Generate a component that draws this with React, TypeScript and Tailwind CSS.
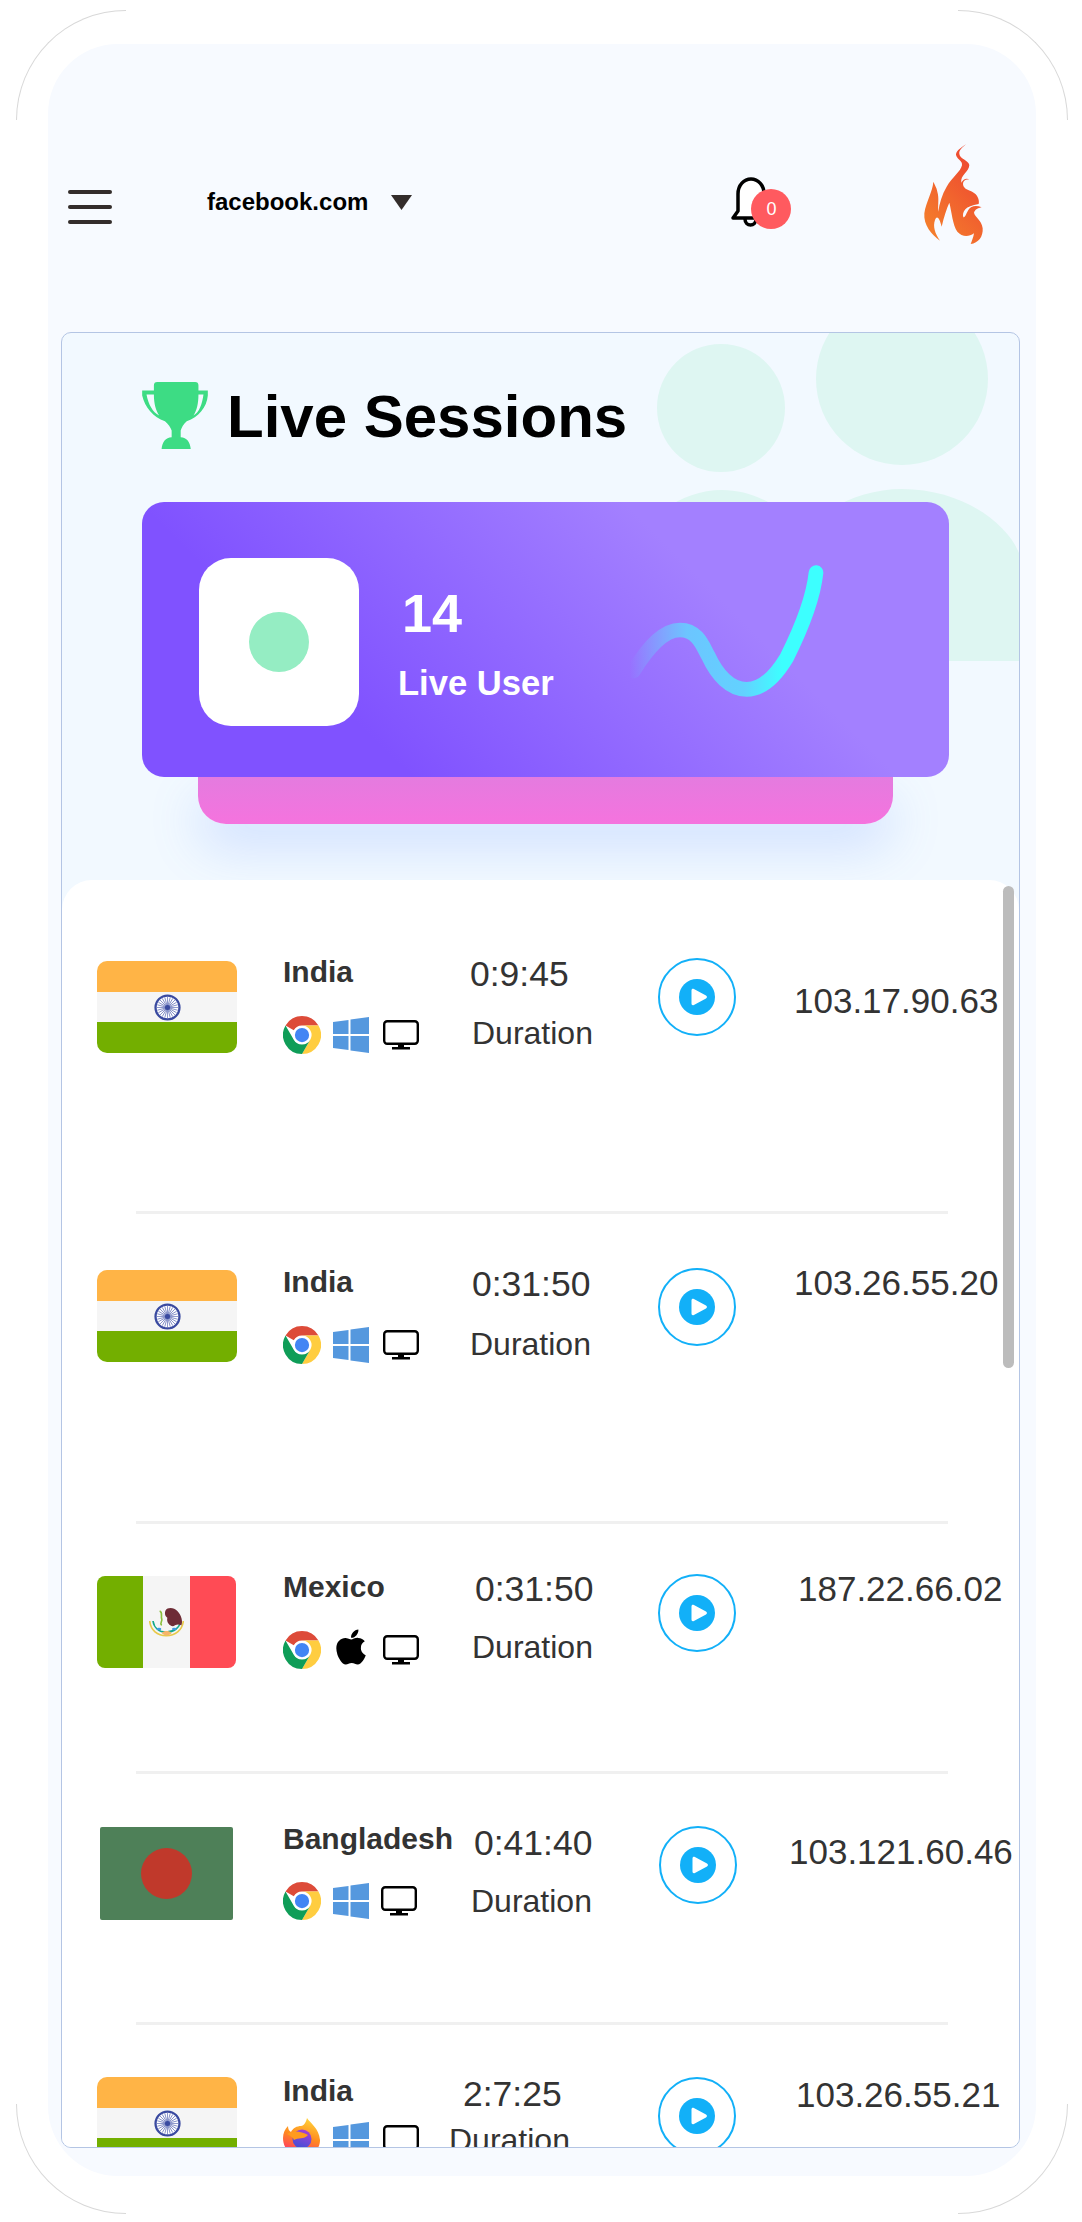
import React from 'react';
import { FaApple } from 'react-icons/fa';

const Chrome = () => (
  <svg viewBox="0 0 48 48" className="w-[38px] h-[38px] shrink-0">
    <path d="M24 0A24 24 0 0 1 44.8 12H24A12 12 0 0 0 13.6 18L3.2 12A24 24 0 0 1 24 0Z" fill="#dd4b39" />
    <path d="M44.8 12A24 24 0 0 1 24 48L34.4 30A12 12 0 0 0 24 12Z" fill="#ffcd40" />
    <path d="M3.2 12A24 24 0 0 0 24 48L34.4 30A12 12 0 0 1 13.6 30Z" fill="#0f9d58" />
    <circle cx="24" cy="24" r="11.5" fill="#fff" />
    <circle cx="24" cy="24" r="9" fill="#4285f4" />
  </svg>
);

const Firefox = () => (
  <svg viewBox="0 0 38 38" className="w-[38px] h-[38px] shrink-0">
    <defs>
      <linearGradient id="ff" x1="0.7" y1="0" x2="0.4" y2="1">
        <stop offset="0" stopColor="#ffd43b" />
        <stop offset="0.5" stopColor="#ff8a1f" />
        <stop offset="1" stopColor="#ff2f6e" />
      </linearGradient>
      <linearGradient id="ffBall" x1="0.7" y1="0" x2="0.3" y2="1">
        <stop offset="0" stopColor="#a83fd6" />
        <stop offset="1" stopColor="#3f4fd6" />
      </linearGradient>
    </defs>
    <path d="M24 0C27 5 36 10 37 22C37 32 29 38 19 38C8 38 0 31 0 20C0 15 2 11 5 8C5 11 6 13 8 14C10 10 14 8 18 8C21 8 23 4 24 0Z" fill="url(#ff)" />
    <circle cx="19" cy="21" r="9.5" fill="url(#ffBall)" />
    <path d="M4 16C10 12 18 13 25 17C21 22 15 19 11 22C10 19 7 18 4 16Z" fill="#ff9a1f" />
  </svg>
);

const Windows = () => (
  <svg viewBox="0 0 36 36" className="w-[36px] h-[36px] shrink-0">
    <path d="M0 5L15.5 3V17H0ZM17.5 2.6L36 0V17H17.5ZM0 19H15.5V33L0 31ZM17.5 19H36V36L17.5 33.4Z" fill="#5598de" />
  </svg>
);

const Monitor = () => (
  <svg viewBox="0 0 36 30" className="w-[36px] h-[30px] shrink-0" fill="none">
    <rect x="1.2" y="1.2" width="33.6" height="22.6" rx="3" stroke="#000" strokeWidth="2.4" />
    <path d="M15 24H21V27H27V29.5H9V27H15Z" fill="#000" />
  </svg>
);

const PlayButton = () => (
  <div className="w-[78px] h-[78px] rounded-full border-2 border-[#12b0f8] flex items-center justify-center bg-white">
    <svg viewBox="0 0 36 36" className="w-[36px] h-[36px]">
      <circle cx="18" cy="18" r="18" fill="#12b0f8" />
      <path d="M12.5 11.5C12.5 10 13.6 9.4 14.9 10.1L27 16.6C28.3 17.3 28.3 18.7 27 19.4L14.9 25.9C13.6 26.6 12.5 26 12.5 24.5Z" fill="#fff" />
    </svg>
  </div>
);

const Ashoka = () => {
  const spokes = Array.from({ length: 24 }, (_, i) => (i * 360) / 24);
  return (
    <svg viewBox="0 0 28 28" className="w-[27px] h-[27px]">
      <circle cx="14" cy="14" r="12.4" fill="#fff" stroke="#3a4aa0" strokeWidth="2.4" />
      {spokes.map((a) => (
        <line key={a} x1="14" y1="14" x2="14" y2="3" stroke="#5a68b4" strokeWidth="0.7" transform={`rotate(${a} 14 14)`} />
      ))}
      <circle cx="14" cy="14" r="2.6" fill="#3a4aa0" />
    </svg>
  );
};

const IndiaFlag = () => (
  <div className="ml-[35px] w-[140px] h-[92px] rounded-[10px] overflow-hidden flex flex-col">
    <div className="h-[31px] bg-[#ffb446]" />
    <div className="h-[30px] bg-[#f5f5f5] flex items-center justify-center">
      <Ashoka />
    </div>
    <div className="h-[31px] bg-[#73af00]" />
  </div>
);

const MexicoFlag = () => (
  <div className="ml-[35px] w-[139px] h-[92px] rounded-[8px] overflow-hidden flex">
    <div className="w-[46px] bg-[#73af00]" />
    <div className="w-[47px] bg-[#f5f5f5] flex items-center justify-center">
      <svg viewBox="0 0 105 90" className="w-[35px] h-[30px]" fill="none">
        <path d="M2 42C5 70 25 86 52 86C78 86 100 70 103 42" stroke="#e8c94a" strokeWidth="5" />
        <path d="M12 42C15 62 30 75 52 75C75 75 92 62 95 42" stroke="#12a88a" strokeWidth="5" />
        <path d="M50 10C55 0 75 0 85 12C98 25 102 45 97 55C88 50 80 52 72 58C60 55 52 45 55 32C48 28 46 18 50 10Z" fill="#6e2c36" />
        <path d="M32 12C42 15 35 28 38 35C42 45 30 48 38 55" stroke="#8bbf3c" strokeWidth="5" />
        <path d="M38 78C45 70 60 70 68 78C62 88 45 88 38 78Z" fill="#f5b56a" />
        <ellipse cx="30" cy="66" rx="7" ry="4" fill="#3f9be0" />
        <ellipse cx="76" cy="66" rx="7" ry="4" fill="#3f9be0" />
      </svg>
    </div>
    <div className="flex-1 bg-[#ff4b55]" />
  </div>
);

const BangladeshFlag = () => (
  <div className="ml-[38px] w-[133px] h-[93px] rounded-[2px] bg-[#4e8058] flex items-center justify-center">
    <div className="w-[51px] h-[51px] rounded-full bg-[#c0392b]" />
  </div>
);

type Row = {
  country: string;
  time: string;
  ip: string;
  flag: React.ReactNode;
  browser: React.ReactNode;
  os: React.ReactNode;
  height: string;
  flagTop: string;
  nameTop: string;
  iconsTop: string;
  osTop: string;
  timeTop: string;
  timeLeft: string;
  durationTop: string;
  durationLeft: string;
  monitorLeft: string;
  playTop: string;
  playLeft: string;
  ipTop: string;
  ipLeft: string;
};

const rows: Row[] = [
  {
    country: 'India',
    time: '0:9:45',
    ip: '103.17.90.63',
    flag: <IndiaFlag />,
    browser: <Chrome />,
    os: <Windows />,
    height: 'h-[331px]',
    flagTop: 'pt-[81px]',
    nameTop: 'pt-[75px]',
    iconsTop: 'mt-[27px]',
    osTop: 'mt-0',
    timeTop: 'pt-[74px]',
    timeLeft: 'ml-[0px]',
    durationTop: 'mt-[21px]',
    durationLeft: 'ml-[2px]',
    monitorLeft: 'ml-[14px]',
    playTop: 'pt-[78px]',
    playLeft: 'ml-[63px]',
    ipTop: 'pt-[101px]',
    ipLeft: 'ml-[58px]',
  },
  {
    country: 'India',
    time: '0:31:50',
    ip: '103.26.55.20',
    flag: <IndiaFlag />,
    browser: <Chrome />,
    os: <Windows />,
    height: 'h-[307px]',
    flagTop: 'pt-[56px]',
    nameTop: 'pt-[51px]',
    iconsTop: 'mt-[27px]',
    osTop: 'mt-0',
    timeTop: 'pt-[50px]',
    timeLeft: 'ml-[2px]',
    durationTop: 'mt-[22px]',
    durationLeft: 'ml-[0px]',
    monitorLeft: 'ml-[14px]',
    playTop: 'pt-[54px]',
    playLeft: 'ml-[63px]',
    ipTop: 'pt-[49px]',
    ipLeft: 'ml-[58px]',
  },
  {
    country: 'Mexico',
    time: '0:31:50',
    ip: '187.22.66.02',
    flag: <MexicoFlag />,
    browser: <Chrome />,
    os: <FaApple className="w-[40px] h-[40px] text-black shrink-0 -mt-[6px] -ml-[2px]" />,
    height: 'h-[247px]',
    flagTop: 'pt-[52px]',
    nameTop: 'pt-[46px]',
    iconsTop: 'mt-[27px]',
    osTop: 'mt-0',
    timeTop: 'pt-[45px]',
    timeLeft: 'ml-[5px]',
    durationTop: 'mt-[20px]',
    durationLeft: 'ml-[2px]',
    monitorLeft: 'ml-[12px]',
    playTop: 'pt-[50px]',
    playLeft: 'ml-[63px]',
    ipTop: 'pt-[45px]',
    ipLeft: 'ml-[62px]',
  },
  {
    country: 'Bangladesh',
    time: '0:41:40',
    ip: '103.121.60.46',
    flag: <BangladeshFlag />,
    browser: <Chrome />,
    os: <Windows />,
    height: 'h-[248px]',
    flagTop: 'pt-[53px]',
    nameTop: 'pt-[48px]',
    iconsTop: 'mt-[26px]',
    osTop: 'mt-0',
    timeTop: 'pt-[49px]',
    timeLeft: 'ml-[4px]',
    durationTop: 'mt-[20px]',
    durationLeft: 'ml-[1px]',
    monitorLeft: 'ml-[12px]',
    playTop: 'pt-[52px]',
    playLeft: 'ml-[64px]',
    ipTop: 'pt-[58px]',
    ipLeft: 'ml-[52px]',
  },
  {
    country: 'India',
    time: '2:7:25',
    ip: '103.26.55.21',
    flag: <IndiaFlag />,
    browser: <Firefox />,
    os: <Windows />,
    height: 'h-[200px]',
    flagTop: 'pt-[52px]',
    nameTop: 'pt-[49px]',
    iconsTop: 'mt-[7px]',
    osTop: 'mt-[7px]',
    timeTop: 'pt-[49px]',
    timeLeft: 'ml-[-7px]',
    durationTop: 'mt-[8px]',
    durationLeft: 'ml-[-21px]',
    monitorLeft: 'ml-[14px]',
    playTop: 'pt-[52px]',
    playLeft: 'ml-[63px]',
    ipTop: 'pt-[50px]',
    ipLeft: 'ml-[60px]',
  },
];

const SessionRow = ({ row, last }: { row: Row; last: boolean }) => (
  <div>
    <div className={`flex items-start ${row.height}`}>
      <div className={`w-[221px] shrink-0 ${row.flagTop}`}>{row.flag}</div>
      <div className={`w-[187px] shrink-0 ${row.nameTop}`}>
        <div className="text-[30px] leading-[34px] font-bold text-[#333] whitespace-nowrap">{row.country}</div>
        <div className={`flex items-center ${row.iconsTop}`}>
          {row.browser}
          <div className={`ml-[12px] ${row.osTop}`}>{row.os}</div>
          <div className={`${row.monitorLeft} ${row.osTop}`}>
            <Monitor />
          </div>
        </div>
      </div>
      <div className={`w-[125px] shrink-0 text-[#333] whitespace-nowrap ${row.timeTop}`}>
        <div className={`text-[35.5px] leading-[40px] ${row.timeLeft}`}>{row.time}</div>
        <div className={`text-[32px] leading-[36px] ${row.durationTop} ${row.durationLeft}`}>Duration</div>
      </div>
      <div className={`shrink-0 ${row.playTop} ${row.playLeft}`}>
        <PlayButton />
      </div>
      <div className={`shrink-0 text-[35px] leading-[40px] text-[#333] whitespace-nowrap ${row.ipTop} ${row.ipLeft}`}>
        {row.ip}
      </div>
    </div>
    {!last && <div className="ml-[74px] w-[812px] h-[3px] bg-[#f0f0f0]" />}
  </div>
);

const Flame = () => (
  <svg viewBox="0 0 330 390" className="w-[110px] h-[130px]">
    <defs>
      <linearGradient id="flame" x1="0.2" y1="0.9" x2="0.7" y2="0.1">
        <stop offset="0" stopColor="#f47c2c" />
        <stop offset="1" stopColor="#ee4a30" />
      </linearGradient>
    </defs>
    <path
      d="M198 43C180 55 164 66 169 78C174 90 188 92 186 106C182 125 156 142 140 170C126 194 118 220 115 245C113 225 118 205 112 185C110 172 104 165 100 155C98 185 78 215 73 250C70 285 95 315 120 332C105 310 98 290 105 270C110 255 118 262 125 290C132 260 140 235 148 218C155 245 158 285 172 305C185 320 205 322 222 310C220 322 216 332 212 342C235 340 250 320 248 295C245 270 225 262 222 248C225 238 235 234 245 232C228 225 212 228 205 240C198 252 196 262 190 262C186 245 195 228 236 222C240 205 228 188 210 182C195 178 186 168 190 156C193 150 200 148 208 148C198 143 190 148 184 158C180 135 208 125 208 105C205 90 180 88 178 72C176 60 190 50 198 43Z"
      fill="url(#flame)"
    />
  </svg>
);

const Bell = () => (
  <svg viewBox="0 0 41 51" className="w-[41px] h-[51px]" fill="none" stroke="#000" strokeWidth="3.5" strokeLinejoin="round">
    <path d="M7 34V17C7 8 13 2 20 2C27 2 33 8 33 17V34L38 41H2Z" fill="#fff" />
    <path d="M14 42C14 50 25 50 25 42" />
  </svg>
);

const Trophy = () => (
  <svg viewBox="37 35 196 200" className="w-[66px] h-[67px] shrink-0 -mt-[3px]">
    <path
      fillRule="evenodd"
      d="M72 45Q72 35 82 35H195Q205 35 205 45V60H233V75C230 110 205 140 170 152C160 160 155 170 152 180V200C170 200 180 215 182 235H95C97 215 107 200 125 200V180C122 170 115 160 105 152C70 140 45 110 37 75V60H72ZM50 72H72C72 100 78 120 88 135C68 125 55 100 50 72ZM220 72H205C205 100 200 120 190 135C208 125 216 100 220 72Z"
      fill="#3ddc84"
    />
  </svg>
);

export default function App() {
  return (
    <div className="relative w-[1082px] h-[2222px] bg-white pt-[44px] pl-[48px] font-['Liberation_Sans',Arial,sans-serif]">
      {/* frame corners */}
      <div className="absolute left-[16px] top-[10px] w-[110px] h-[110px] border-l border-t border-[#d8d8d8] rounded-tl-[110px]" />
      <div className="absolute left-[958px] top-[10px] w-[110px] h-[110px] border-r border-t border-[#d8d8d8] rounded-tr-[110px]" />
      <div className="absolute left-[16px] top-[2104px] w-[110px] h-[110px] border-l border-b border-[#d8d8d8] rounded-bl-[110px]" />
      <div className="absolute left-[958px] top-[2104px] w-[110px] h-[110px] border-r border-b border-[#d8d8d8] rounded-br-[110px]" />

      <div className="relative w-[988px] h-[2132px] bg-[#f7faff] rounded-[70px]">
        {/* header */}
        <div className="flex items-start h-[288px]">
          <div className="ml-[20px] mt-[146px] w-[44px] flex flex-col gap-[11px]">
            <div className="h-[4px] rounded-full bg-[#332c2b]" />
            <div className="h-[4px] rounded-full bg-[#332c2b]" />
            <div className="h-[4px] rounded-full bg-[#332c2b]" />
          </div>
          <div className="ml-[95px] mt-[144px] text-[24px] leading-[28px] font-bold text-black">facebook.com</div>
          <svg viewBox="0 0 21 15" className="ml-[23px] mt-[151px] w-[21px] h-[15px]">
            <path d="M0 0H21L10.5 15Z" fill="#332c2b" />
          </svg>
          <div className="relative ml-[319px] mt-[133px] w-[41px] h-[51px]">
            <Bell />
            <div className="absolute left-[20px] top-[12px] w-[40px] h-[40px] rounded-full bg-[#ff5a5f] text-white text-[18px] flex items-center justify-center">
              0
            </div>
          </div>
          <div className="ml-[128px] mt-[86px]">
            <Flame />
          </div>
        </div>

        {/* card */}
        <div className="relative ml-[13px] w-[959px] h-[1816px] rounded-[10px] border border-[#b4c5e4] bg-[#f2f9ff] overflow-hidden">
          <svg className="absolute left-0 top-0 w-[957px] h-[328px]" viewBox="0 0 957 328">
            <circle cx="659" cy="75" r="64" fill="#def6f2" />
            <circle cx="840" cy="46" r="86" fill="#def6f2" />
            <path d="M560 328V258C560 200 610 157 660 157C710 157 760 200 760 258V328Z" fill="#def6f2" />
            <path d="M688 328V309C688 230 760 156 840 156C900 156 945 190 957 220V328Z" fill="#def6f2" />
          </svg>

          <div className="relative flex items-center pt-[49px] pl-[80px]">
            <Trophy />
            <h1 className="ml-[19px] text-[60px] leading-[70px] font-bold text-black">Live Sessions</h1>
          </div>

          <div className="relative ml-[80px] mt-[50px] w-[807px]">
            <div className="relative z-10 h-[275px] rounded-[22px] bg-[linear-gradient(45deg,#8052ff_25%,#a380ff_70%)] flex items-start">
              <div className="ml-[57px] mt-[56px] w-[160px] h-[168px] rounded-[32px] bg-white flex items-center justify-center">
                <div className="w-[60px] h-[60px] rounded-full bg-[#95edc3]" />
              </div>
              <div className="ml-[39px] mt-[80px] text-white font-bold w-[156px]">
                <div className="ml-[4px] text-[54px] leading-[62px]">14</div>
                <div className="mt-[19px] text-[34.6px] leading-[40px] whitespace-nowrap">Live User</div>
              </div>
              <svg viewBox="0 0 660 480" className="ml-[66px] mt-[49px] w-[220px] h-[160px]" fill="none">
                <defs>
                  <linearGradient id="wave" gradientUnits="userSpaceOnUse" x1="30" y1="0" x2="600" y2="0">
                    <stop offset="0" stopColor="#6cc5ff" stopOpacity="0" />
                    <stop offset="0.3" stopColor="#6cc5ff" />
                    <stop offset="0.6" stopColor="#62d2ff" />
                    <stop offset="0.8" stopColor="#3dffff" />
                  </linearGradient>
                </defs>
                <path
                  d="M40 360C90 280 135 237 180 237C235 237 250 290 265 315C290 370 330 415 380 415C430 415 470 370 500 320C550 220 580 140 588 65"
                  stroke="url(#wave)"
                  strokeWidth="44"
                  strokeLinecap="round"
                />
              </svg>
            </div>
            <div className="mx-auto w-[695px] h-[47px] rounded-b-[28px] bg-[linear-gradient(180deg,#e47bdf,#f573de)] shadow-[0_24px_50px_rgba(90,140,255,0.22)]" />
          </div>

          {/* list */}
          <div className="absolute left-0 top-[547px] w-[957px] h-[1300px] rounded-t-[30px] bg-white">
            {rows.map((row, i) => (
              <SessionRow key={i} row={row} last={i === rows.length - 1} />
            ))}
            <div className="absolute left-[941px] top-[6px] w-[11px] h-[482px] rounded-full bg-[#bcbcbc]" />
          </div>
        </div>
      </div>
    </div>
  );
}
